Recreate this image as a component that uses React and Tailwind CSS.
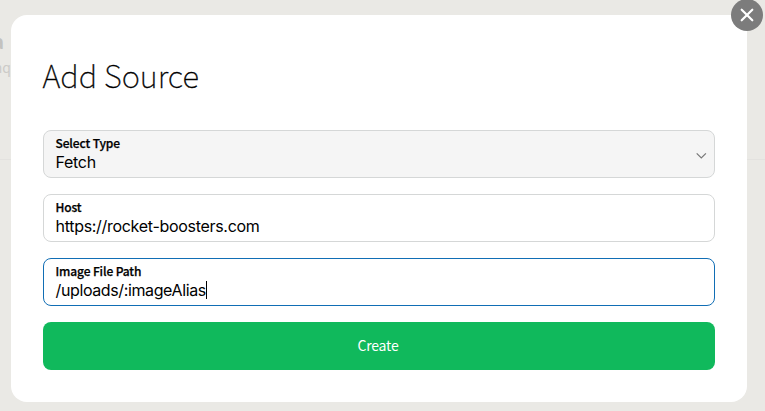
const sans = "font-['Noto_Sans_CJK_SC','Noto_Sans',sans-serif]";
const ui = "font-[Inter,'Liberation_Sans',sans-serif]";

function Field({ label, value, className, tracking = "tracking-[-0.3px]", children }) {
  return (
    <div className={`relative flex h-12 flex-col rounded-lg border px-[11.5px] pt-[3px] ${className}`}>
      <span className={`${sans} h-[19px] text-[12px] leading-[18px] font-medium tracking-[-0.12px] text-black [-webkit-text-stroke:0.25px_black]`}>
        <span className="inline-block">{label}</span>
      </span>
      <span className={`${ui} flex h-[18px] items-center text-[16px] leading-[18px] text-black ${tracking}`}>
        <span>{value}</span>
        {children}
      </span>
    </div>
  );
}

export default function App() {
  return (
    <div className="relative h-[411px] w-[765px] overflow-hidden bg-[#eae9e5] pt-[15px] pl-[11px]">
      <span className={`${sans} absolute top-[28px] right-[761px] text-[19px] leading-[26px] font-bold text-[#c3c2bf]`}>a</span>
      <span className={`${sans} absolute top-[57px] right-[754px] text-[14px] leading-[20px] text-[#cccbc8]`}>nq</span>
      <div className="absolute top-[159px] left-0 h-px w-full bg-[#e3e2df]" />

      <div className="relative h-[387px] w-[736px] rounded-2xl bg-white px-8 pt-[39px]">
        <h1 className={`${sans} -ml-[0.5px] h-[76px] text-[31px] leading-[42px] font-thin text-black [-webkit-text-stroke:0.35px_black]`}>
          <span className="inline-block">Add Source</span>
        </h1>
        <div className="flex flex-col gap-4">
          <Field label="Select Type" value="Fetch" className="border-[#d5d7d7] bg-[#f5f5f5]">
            <svg className="absolute top-[21px] right-[7px]" width="12" height="8" viewBox="0 0 12 8" fill="none" stroke="#777" strokeWidth="1.2">
              <path d="M1.7 1.3 L6.3 5.9 L10.9 1.3" />
            </svg>
          </Field>
          <Field label="Host" value="https://rocket-boosters.com" className="border-[#d5d7d7] bg-white" />
          <Field label="Image File Path" value="/uploads/:imageAlias" tracking="tracking-[-0.38px]" className="border-[#116eb5] bg-white">
            <span className="h-[18px] w-px bg-black" />
          </Field>
          <button className={`${sans} h-12 rounded-lg bg-[#10b95c] pr-[2px] pb-[2px] text-[14px] tracking-[-0.2px] text-white`}>Create</button>
        </div>
        <button aria-label="Close" className="absolute -top-4 -right-4 flex size-8 items-center justify-center rounded-full bg-[#7c7c7c]">
          <svg width="14" height="14" viewBox="0 0 14 14" fill="none" stroke="white" strokeWidth="2.2" strokeLinecap="round">
            <path d="M1.7 1.7 L12.3 12.3 M12.3 1.7 L1.7 12.3" />
          </svg>
        </button>
      </div>
    </div>
  );
}
